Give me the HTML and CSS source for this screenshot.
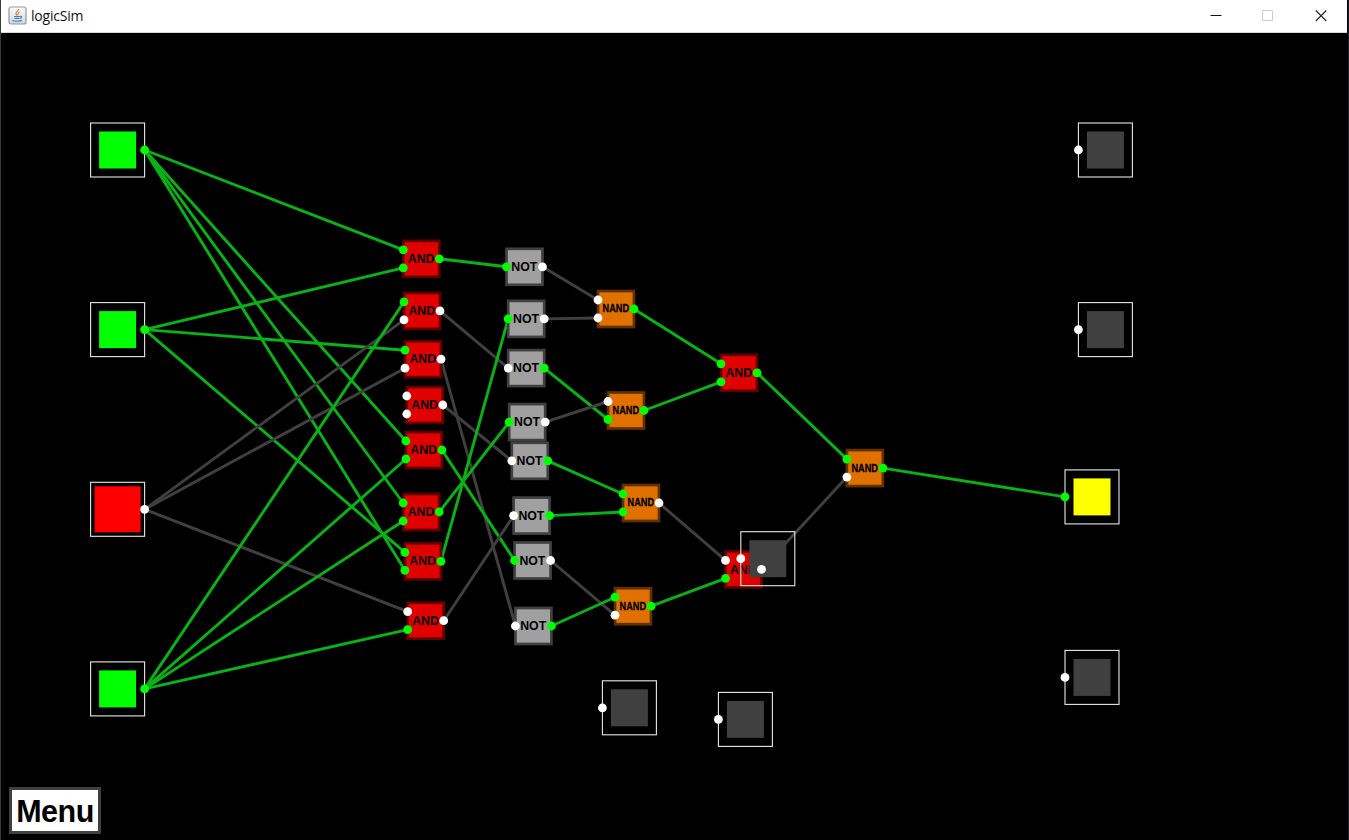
FILE: index.html
```html
<!DOCTYPE html>
<html lang="en">
<head>
<meta charset="utf-8">
<title>logicSim</title>
<link rel="stylesheet" href="styles.css">
</head>
<body>
<div class="window">
  <header class="titlebar">
    <svg class="app-icon" width="19" height="19" viewBox="0 0 19 19">
      <defs><linearGradient id="tile" x1="0" y1="0" x2="0" y2="1"><stop offset="0" stop-color="#fafcfd"/><stop offset="1" stop-color="#ccd8e1"/></linearGradient></defs>
      <rect x="1" y="1" width="17" height="17" rx="2" fill="url(#tile)" stroke="#8d9ba6" stroke-width="1.2"/>
      <path d="M10.600 3C11 5 7.200 5.900 8 7.800 8.300 8.600 9 9 9 9.700M11.800 6C9.500 7 9.700 8 10.300 8.800" fill="none" stroke="#e8893a" stroke-width="1.300"/>
      <path d="M6 10.500h6M6.500 12.400h5M12 10.300c2.200-.4 1.900 1.600.1 2.100M4.500 14.500c2 1 7.500 1 9.500-.2" fill="none" stroke="#4f7fa8" stroke-width="1.200"/>
    </svg>
    <span class="title">logicSim</span>
    <div class="controls">
      <svg width="12" height="12" viewBox="0 0 12 12"><path d="M.5 5.500h11" stroke="#111" fill="none"/></svg>
      <svg width="12" height="12" viewBox="0 0 12 12"><path d="M.5 .5h10v10h-10z" stroke="#ccc" fill="none"/></svg>
      <svg width="12" height="12" viewBox="0 0 12 12"><path d="M.8.500l10.500 10.500M11.300.500L.8 11" stroke="#222" stroke-width="1.100" fill="none"/></svg>
    </div>
  </header>
  <main class="board">
    <svg id="circuit" class="circuit" width="1347" height="807" viewBox="1 33 1347 807"></svg>
    <button class="menu">Menu</button>
  </main>
</div>
<script src="circuit.js"></script>
</body>
</html>
```
FILE: styles.css
```css
* { box-sizing: border-box; }
body { margin: 0; background: #000; overflow: hidden; }
.window {
  width: 1349px;
  height: 840px;
  display: flex;
  flex-direction: column;
  border-left: 1px solid #3a3a3a;
  border-right: 1px solid #1c1c22;
}
.titlebar {
  height: 33px;
  flex: none;
  display: flex;
  align-items: center;
  padding: 0 20.500px 2px 7px;
  margin-right: 1px;
  background: #fff;
  border-bottom: 1px solid #d8d8d8;
}
.app-icon { margin-right: 4px; }
.title { font: 14px/20px "Open Sans", "Noto Sans", sans-serif; letter-spacing: -0.2px; color: #111; padding-top: 1px; }
.controls { margin-left: auto; display: flex; gap: 40.500px; padding-top: 1px; }
.controls svg { display: block; }
.board { display: grid; width: 1347px; height: 807px; background: #000; }
.circuit { grid-area: 1 / 1; display: block; }
.menu {
  grid-area: 1 / 1;
  align-self: end;
  justify-self: start;
  width: 92px;
  height: 47px;
  margin: 0 0 6px 8px;
  padding: 0;
  border: 3px solid #404040;
  background: #fff;
  color: #000;
  font: bold 30.500px/40px "Liberation Sans", Arial, sans-serif;
  letter-spacing: -0.5px;
}
.wire { stroke: #404040; stroke-width: 2.900; }
.wire.on { stroke: #08b415; }
.gate { stroke-width: 2.700; }
.gate.and { fill: #e00000; stroke: #600000; }
.gate.not { fill: #a0a0a0; stroke: #404040; }
.gate.nand { fill: #e07000; stroke: #603000; }
.label { font: bold 12.300px "Liberation Sans", Arial, sans-serif; text-anchor: middle; fill: #000; }
.label.nand { font-size: 10px; stroke: #000; stroke-width: 0.300; }
.pin { fill: #fff; }
.pin.on { fill: #0f0; }
.frame { fill: none; stroke: #e8e8e8; stroke-width: 1.100; }
.lamp { fill: #404040; }
.lamp.green { fill: #0f0; }
.lamp.red { fill: #f00; }
.lamp.yellow { fill: #ff0; }
```
FILE: circuit.js
```js
const svg = document.getElementById("circuit");

function add(name, attrs, text) {
  const el = document.createElementNS("http://www.w3.org/2000/svg", name);
  for (const key in attrs) el.setAttribute(key, attrs[key]);
  if (text) el.textContent = text;
  svg.appendChild(el);
}

// id: [type, left pin x, centre y, pin states (inputs..., output)]
const gates = {
  a1: ["AND", 403.3, 258.8, "111"],
  a2: ["AND", 404, 310.9, "100"],
  a3: ["AND", 405, 359.2, "100"],
  a4: ["AND", 406.8, 405, "000"],
  a5: ["AND", 405.9, 450, "111"],
  a6: ["AND", 403.2, 512, "111"],
  a7: ["AND", 404.9, 561.3, "111"],
  a8: ["AND", 407.7, 620.7, "010"],
  n1: ["NOT", 506.500, 266.8, "10"],
  n2: ["NOT", 508.2, 318.9, "10"],
  n3: ["NOT", 508.2, 368.1, "01"],
  n4: ["NOT", 509.2, 422.1, "10"],
  n5: ["NOT", 511.8, 460.8, "01"],
  n6: ["NOT", 513.600, 515.600, "01"],
  n7: ["NOT", 514.600, 560.500, "10"],
  n8: ["NOT", 515.400, 626, "01"],
  d1: ["NAND", 598, 309, "001"],
  d2: ["NAND", 608, 410.500, "011"],
  d3: ["NAND", 623, 503, "110"],
  d4: ["NAND", 615, 606.2, "101"],
  a9: ["AND", 721, 372.8, "111"],
  a10: ["AND", 725.500, 569.400, "010"],
  d5: ["NAND", 846.900, 468.100, "101"]
};

const switches = {
  A: [117.600, 150, "green", 37],
  B: [117.600, 329.600, "green", 37],
  C: [117.600, 509.300, "red", 46],
  D: [117.600, 688.900, "green", 37]
};

const lamps = [
  [1105.400, 150], [1105.400, 329.600], [1092, 496.900, "yellow"],
  [1092, 677.400], [629.400, 707.800], [745.400, 719.400], [767.800, 558.700]
];

const wires = `A a1.0|A a5.0|A a6.0|A a7.1|B a1.1|B a3.0|B a7.0|C a2.1|C a3.1|C a8.0
|D a2.0|D a5.1|D a6.1|D a8.1|a1 n1.0|a2 n3.0|a3 n8.0|a4 n5.0|a5 n7.0|a6 n4.0|a7 n2.0|a8 n6.0
|n1 d1.0|n2 d1.1|n3 d2.1|n4 d2.0|n5 d3.0|n6 d3.1|n7 d4.1|n8 d4.0
|d1 a9.0|d2 a9.1|d3 a10.0|d4 a10.1|a9 d5.0|a10 d5.1`.split("|");

function inputPin(id, index) {
  const [type, x, y] = gates[id];
  return type === "NOT" ? [x, y] : [x, y + (index == 0 ? -9 : 9)];
}

function drawWire([x1, y1], [x2, y2], on) {
  add("line", { x1, y1, x2, y2, class: on ? "wire on" : "wire" });
}

function drawPin([cx, cy], on) {
  add("circle", { cx, cy, r: 4.4, class: on ? "pin on" : "pin" });
}

function drawBox(cx, cy, color, size) {
  add("rect", { x: cx - 27, y: cy - 27, width: 54, height: 54, class: "frame" });
  add("rect", { x: cx - size / 2, y: cy - size / 2, width: size, height: size, class: "lamp " + color });
}

for (const wire of wires) {
  const [from, to] = wire.trim().split(" ");
  const [id, index] = to.split(".");
  const source = switches[from];
  const start = source ? [source[0] + 27, source[1]] : [gates[from][1] + 36, gates[from][2]];
  const on = source ? source[2] === "green" : gates[from][3].endsWith("1");
  drawWire(start, inputPin(id, index), on);
}
drawWire([882.900, 468.100], [1065, 496.900], true);

for (const id in gates) {
  const [type, x, y] = gates[id];
  const kind = type.toLowerCase();
  add("rect", { x, y: y - 18, width: 36, height: 36, class: "gate " + kind });
  const label = { x: x + 17.8, y: y + (type === "NAND" ? 3.4 : 4.1), class: "label " + kind };
  if (type === "NAND") Object.assign(label, { textLength: 26.4, lengthAdjust: "spacingAndGlyphs" });
  add("text", label, type);
}

for (const id in switches) {
  const [x, y, color, size] = switches[id];
  drawBox(x, y, color, size);
  drawPin([x + 27, y], color === "green");
}

for (const [x, y, color = ""] of lamps) {
  drawBox(x, y, color, 37);
  drawPin([x - 27, y], color === "yellow");
}

for (const id in gates) {
  const [type, x, y, state] = gates[id];
  for (let i = 0; i < state.length - 1; i++) drawPin(inputPin(id, i), state[i] === "1");
  drawPin([x + 36, y], state.endsWith("1"));
}
```
